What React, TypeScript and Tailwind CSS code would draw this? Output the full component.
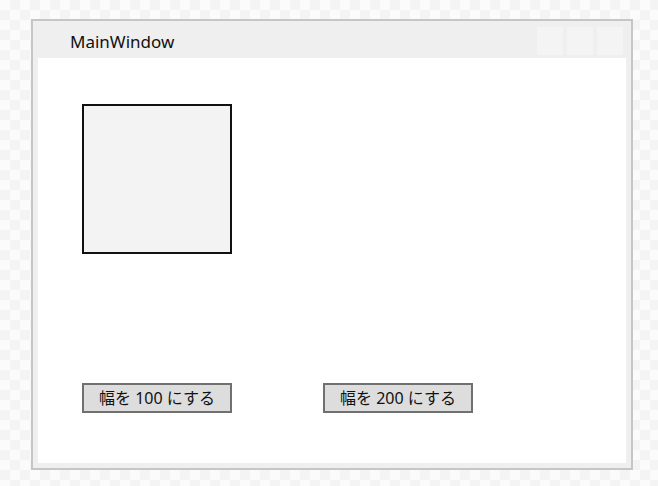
import React from "react";

const font = { fontFamily: '"Noto Sans", "Noto Sans CJK JP", sans-serif' };

function CaptionButtons() {
  return (
    <div className="flex gap-[4px] pt-[6px] pr-[8px]">
      {[0, 1, 2].map((i) => (
        <div key={i} className="w-[26px] h-[28px] bg-[#f4f4f4]" />
      ))}
    </div>
  );
}

function WpfButton({ label, className }: { label: string; className?: string }) {
  return (
    <button
      className={`w-[150px] h-[30px] border-2 border-[#707070] bg-[#dddddd] text-[16px] leading-none text-[#111] flex items-center justify-center ${className ?? ""}`}
    >
      {label}
    </button>
  );
}

export default function App() {
  return (
    <div
      className="w-[658px] h-[486px] pt-[19px] pl-[31px] bg-[repeating-conic-gradient(#f4f4f4_0_25%,#fbfbfb_0_50%)] bg-[length:20px_20px]"
      style={font}
    >
      <div className="w-[602px] h-[451px] border-2 border-[#c6c6c6] bg-[#efefef] flex flex-col">
        <div className="h-[37px] flex justify-between items-start">
          <span className="pl-[37px] pt-[11px] text-[17px] leading-[20px] text-[#111]">
            MainWindow
          </span>
          <CaptionButtons />
        </div>
        <div className="flex-1 mx-[5px] mb-[5px] bg-white flex flex-col pl-[44px] pt-[46px]">
          <div className="w-[150px] h-[150px] border-2 border-[#111] bg-[#f3f3f3]" />
          <div className="flex mt-[129px] gap-[91px]">
            <WpfButton label="幅を 100 にする" />
            <WpfButton label="幅を 200 にする" />
          </div>
        </div>
      </div>
    </div>
  );
}
